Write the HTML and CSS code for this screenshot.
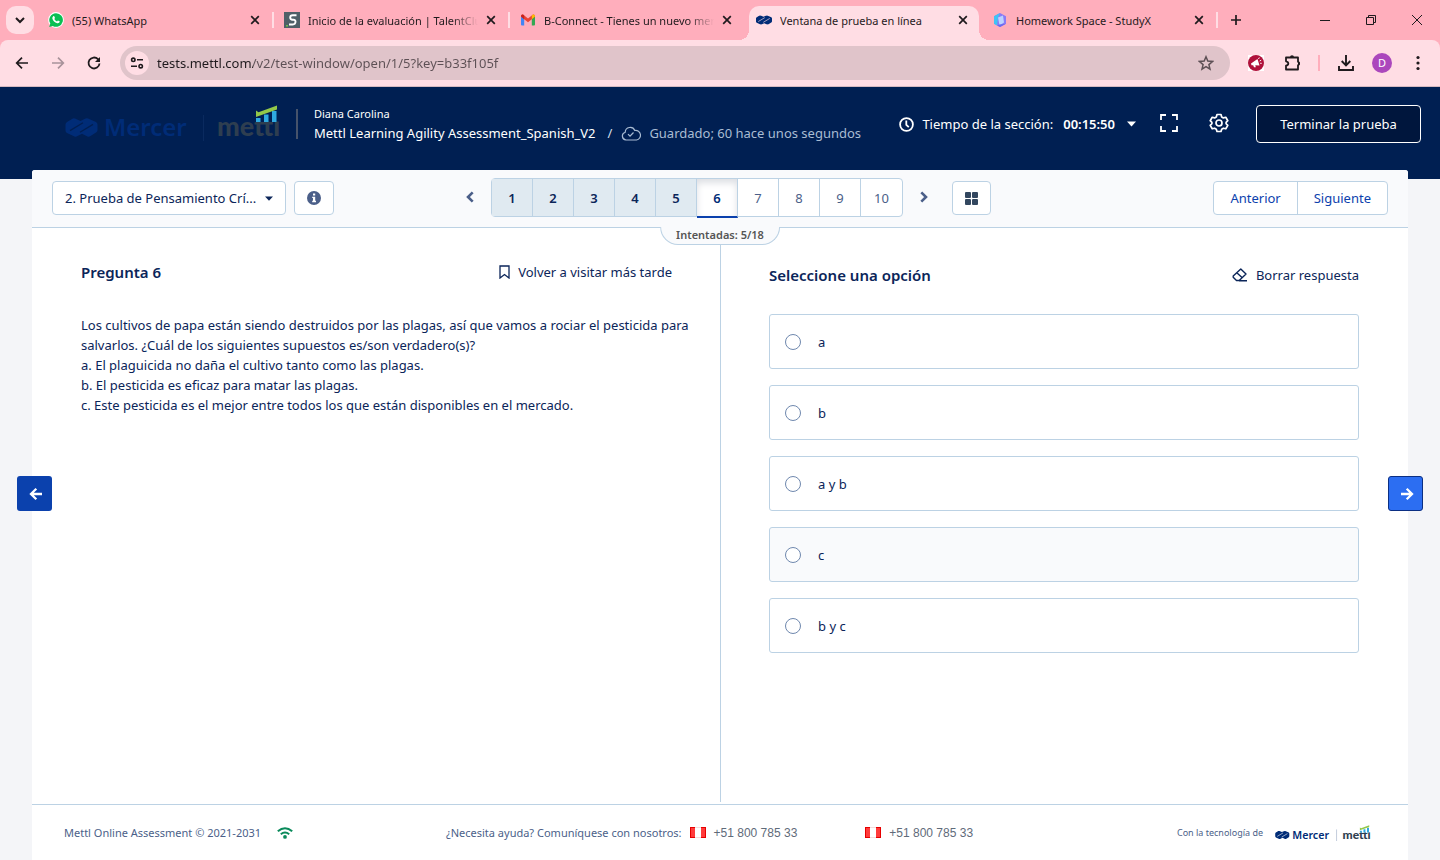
FILE: index.html
```html
<!DOCTYPE html>
<html lang="es">
<head>
<meta charset="utf-8">
<title>Ventana de prueba en línea</title>
<link rel="stylesheet" href="styles.css">
</head>
<body>
<svg class="defs" aria-hidden="true">
  <symbol id="close" viewBox="0 0 10 10"><path d="M1.2 1.2l7.6 7.6M8.8 1.2L1.2 8.8" stroke="currentColor" stroke-width="1.7"/></symbol>
  <symbol id="mercer" viewBox="0 0 32 19"><path d="M0 6.500Q0 5 1.500 4L7 .7Q8 0 9.500.5L15 3 19.500.8Q21 0 22.500.5L30.500 4Q32 5 32 6.500V12Q32 13.500 30.500 14.500L25 18Q23.500 19 22 18.400L16.500 15.800 12 18Q10.500 19 9 18.400L1.500 15Q0 14 0 12.500Z" fill="currentColor"/><path d="M4.500 12.600L17.500 4.800M14.500 14.200L27.500 6.400" class="mark-cut" fill="none" stroke-width="1.3"/></symbol>
  <symbol id="flag" viewBox="0 0 16 11"><path d="M0 0h16v11H0z" fill="#e60000"/><path d="M1 1h14v9H1z" fill="#ff3b3b"/><path d="M5 0h6v11H5z" fill="#f3dcdc"/><path d="M5 1h6v9H5z" fill="#fff"/></symbol>
</svg>

<header class="browser">
  <div class="tabs">
    <button class="tab-search" aria-label="Buscar pestañas"><svg width="10" height="7" viewBox="0 0 10 7"><path d="M1 1l4 4 4-4" fill="none" stroke="currentColor" stroke-width="2"/></svg></button>
    <div class="tab tab-line">
      <svg class="favicon" viewBox="0 0 16 16"><circle cx="8" cy="8" r="7.900" fill="#fff"/><path d="M8 1.200a6.800 6.800 0 1 1-3.300 12.700L1.200 15l1.100-3.400A6.800 6.800 0 0 1 8 1.200Z" fill="#0abf53"/><path d="M5.200 4.300c.6-.6 1.100-.2 1.300.4l.5 1.200-.7 1c.6 1.200 1.500 2 2.700 2.500l.9-1 1.800.9c0 1.500-1.200 2.200-2.500 1.900C6.800 10.700 4.800 8.600 4.300 6.300c0-.8.3-1.500.9-2Z" fill="#fff"/></svg>
      <span class="tab-title">(55) WhatsApp</span>
      <button class="tab-close" aria-label="Cerrar"><svg><use href="#close"/></svg></button>
    </div>
    <div class="tab tab-line">
      <svg class="favicon" viewBox="0 0 16 16"><path d="M0 0h16v16H0z" fill="#4f6068"/><path d="M12.500 3.200H8.800q-2.600 0-2.600 2.200T8.600 7.700h.9q2.200 0 2 2.300t-2.800 2.500H5" fill="none" stroke="#fff" stroke-width="1.900"/><path d="M2 13h2v1.500H2z" fill="#6bbf4a"/></svg>
      <span class="tab-title tab-fade">Inicio de la evaluación | TalentClue</span>
      <button class="tab-close" aria-label="Cerrar"><svg><use href="#close"/></svg></button>
    </div>
    <div class="tab">
      <svg class="favicon" viewBox="0 0 16 16"><path d="M1 4h3.200v9.500H2Q1 13.500 1 12.500Z" fill="#4285f4"/><path d="M11.800 4H15v8.500q0 1-1 1h-2.200Z" fill="#34a853"/><path d="M1 4.500Q1 2 3 2.500L8 6.500 13 2.500Q15 2 15 4.500L11.800 7.300 8 10.300 4.200 7.300Z" fill="#ea4335"/><path d="M11.800 3.400L13 2.500Q15 2 15 4.500L11.800 7.300Z" fill="#fbbc04"/><path d="M1 4.500Q1 2 3 2.500L4.200 3.400V7.300Z" fill="#c5221f"/></svg>
      <span class="tab-title tab-fade">B-Connect - Tienes un nuevo mensaje</span>
      <button class="tab-close" aria-label="Cerrar"><svg><use href="#close"/></svg></button>
    </div>
    <div class="tab tab-active">
      <svg class="favicon" viewBox="0 -5 32 29"><use href="#mercer" width="32" height="19"/></svg>
      <span class="tab-title">Ventana de prueba en línea</span>
      <button class="tab-close" aria-label="Cerrar"><svg><use href="#close"/></svg></button>
    </div>
    <div class="tab tab-line">
      <svg class="favicon" viewBox="0 0 16 16"><path d="M8 1l6 3.200v7.500L8 15l-6-3.300V4.200Z" fill="#8b7bf5"/><path d="M8 1L2 4.200v7.500l3 1.700L6 5.500Z" fill="#3fc4f5"/><path d="M6 5.500l5-2 1 7-4.500 3Z" fill="#bcd3ff"/><path d="M5 13.400L8 15l6-3.300-6.500.8Z" fill="#6a6af0"/></svg>
      <span class="tab-title">Homework Space - StudyX</span>
      <button class="tab-close" aria-label="Cerrar"><svg><use href="#close"/></svg></button>
    </div>
    <button class="new-tab" aria-label="Nueva pestaña"><svg width="12" height="12" viewBox="0 0 12 12"><path d="M6 1v10M1 6h10" stroke="currentColor" stroke-width="1.700"/></svg></button>
    <div class="window-controls">
      <button aria-label="Minimizar"><svg width="12" height="12" viewBox="0 0 12 12"><path d="M1 6.500h10" stroke="currentColor"/></svg></button>
      <button aria-label="Restaurar"><svg width="12" height="12" viewBox="0 0 12 12"><path d="M1.500 3.500h7v7h-7zM3.500 3V1.500h7v7H9" fill="none" stroke="currentColor"/></svg></button>
      <button aria-label="Cerrar ventana"><svg width="12" height="12" viewBox="0 0 12 12"><path d="M1 1l10 10M11 1L1 11" stroke="currentColor"/></svg></button>
    </div>
  </div>
  <div class="toolbar">
    <button class="tool" aria-label="Atrás"><svg width="16" height="16" viewBox="0 0 16 16"><path d="M14 8H3M8 2.700L2.700 8 8 13.300" fill="none" stroke="currentColor" stroke-width="1.700"/></svg></button>
    <button class="tool tool-off" aria-label="Adelante"><svg width="16" height="16" viewBox="0 0 16 16"><path d="M2 8h11M8 2.700L13.300 8 8 13.300" fill="none" stroke="currentColor" stroke-width="1.700"/></svg></button>
    <button class="tool" aria-label="Recargar"><svg width="16" height="16" viewBox="0 0 16 16"><path d="M13.500 8.500A5.500 5.500 0 1 1 12 4.200L13 5.500" fill="none" stroke="currentColor" stroke-width="1.800"/><path d="M14 2v5H9Z" fill="currentColor"/></svg></button>
    <div class="address">
      <button class="site-info" aria-label="Información del sitio"><svg width="14" height="14" viewBox="0 0 14 14" fill="none" stroke="currentColor" stroke-width="1.600"><circle cx="3.300" cy="3.800" r="1.700"/><path d="M7 3.800h6M1 10.200h6"/><circle cx="10.700" cy="10.200" r="1.700"/></svg></button>
      <input class="url" type="text" aria-label="Dirección" value="tests.mettl.com/v2/test-window/open/1/5?key=b33f105f">
      <button class="star" aria-label="Añadir a marcadores"><svg width="16" height="16" viewBox="0 0 16 16"><path d="M8 1.800l1.800 4.300 4.700.4-3.600 3.100 1.100 4.600L8 11.700l-4 2.500 1.100-4.600L1.500 6.500l4.700-.4Z" fill="none" stroke="currentColor" stroke-width="1.500"/></svg></button>
    </div>
    <button class="ext" aria-label="Extensión"><svg width="16" height="16" viewBox="0 0 16 16"><path d="M0 0h16v16H0z" fill="#fff"/><circle cx="8" cy="8" r="8" fill="#b0103a"/><path d="M3 8.500L9.500 4l2 6.500-4.200-.2.500 2H6l-.8-2H3.500Z" fill="#fff"/><path d="M10.500 4l.8-1.500M11.700 6l1.500-.8M12.200 8.300h1.500" stroke="#fff"/></svg></button>
    <button class="ext puzzle" aria-label="Extensiones"><svg width="20" height="18" viewBox="0 0 20 18"><path d="M3 3.500h12v4.200a2 2 0 0 1 0 3.600v4.200H3v-3.800q2.300-.4 2.300-2.200T3 7.300Z" fill="none" stroke="currentColor" stroke-width="1.800" stroke-linejoin="round"/><path d="M7 3.200a2 2 0 0 1 4 0ZM15 7.500a2 2 0 0 1 0 4Z" fill="currentColor"/></svg></button>
    <span class="tool-line"></span>
    <button class="ext" aria-label="Descargas"><svg width="18" height="18" viewBox="0 0 18 18"><path d="M9 1v10M4.700 7L9 11.300 13.300 7M2 12v4h14v-4" fill="none" stroke="currentColor" stroke-width="1.900"/></svg></button>
    <button class="avatar" aria-label="Perfil">D</button>
    <button class="ext" aria-label="Menú"><svg width="4" height="16" viewBox="0 0 4 16" fill="currentColor"><circle cx="2" cy="2.500" r="1.600"/><circle cx="2" cy="8" r="1.600"/><circle cx="2" cy="13.500" r="1.600"/></svg></button>
  </div>
</header>

<div class="app">
  <div class="top">
    <svg class="logo" viewBox="0 0 216 36" role="img" aria-label="Mercer Mettl">
      <use href="#mercer" y="13" width="33" height="19"/>
      <text class="logo-mercer" x="39" y="31">Mercer</text>
      <path class="logo-line" d="M138.500 10v26"/>
      <text class="logo-mettl" x="152" y="31">mettl</text>
      <path class="logo-cover" d="M190 2h26v14.500h-26z"/>
      <path d="M191 13h4.500v4H191zM199 9.500h4.500v7.500H199zM207 6h4.500v11H207z" fill="#2fa9e0"/>
      <path d="M191 5.500l2.500 1.800L212 .5v4L191 12Z" fill="#93c849"/>
    </svg>
    <div class="who">
      <div class="who-name">Diana Carolina</div>
      <div class="who-test"><span>Mettl Learning Agility Assessment_Spanish_V2</span><span class="slash">/</span>
        <svg width="20" height="15" viewBox="0 0 20 15" fill="none" stroke="currentColor" stroke-width="1.200"><path d="M5 14a4 4 0 0 1-.8-7.800A5 5 0 0 1 13.800 4.500a4.800 4.800 0 0 1 1.700 9.500Z"/><path d="M7 8.200L9 10.200 12.500 6.500"/></svg>
        <span class="saved">Guardado; 60 hace unos segundos</span></div>
    </div>
    <div class="timer">
      <svg width="15" height="15" viewBox="0 0 15 15" fill="none" stroke="currentColor" stroke-width="1.800"><circle cx="7.500" cy="7.500" r="6.400"/><path d="M7.300 3.500v4.300l2.500 2.400"/></svg>
      <span>Tiempo de la sección:</span><b>00:15:50</b>
      <button class="bare" aria-label="Mostrar tiempo"><svg width="9" height="6" viewBox="0 0 9 6"><path d="M0 .5h9L4.500 5.500Z" fill="currentColor"/></svg></button>
    </div>
    <button class="bare full" aria-label="Pantalla completa"><svg width="18" height="18" viewBox="0 0 18 18"><path d="M1 6V1h5M12 1h5v5M17 12v5h-5M6 17H1v-5" fill="none" stroke="currentColor" stroke-width="1.800"/></svg></button>
    <button class="bare gear" aria-label="Configuración"><svg width="20" height="20" viewBox="0 0 20 20" fill="none" stroke="currentColor" stroke-width="1.700" stroke-linejoin="round"><circle cx="10" cy="10" r="3"/><path d="M8 1.500h4l.7 2.400 1.700 1 2.400-.6 2 3.400-1.700 1.700v1.300l1.700 1.700-2 3.400-2.400-.6-1.700 1-.7 2.300H8l-.7-2.300-1.700-1-2.400.6-2-3.400 1.700-1.700V9.400L1.200 7.700l2-3.400 2.400.6 1.700-1Z"/></svg></button>
    <button class="finish">Terminar la prueba</button>
  </div>

  <main class="card">
    <nav class="bar">
      <div class="bar-left">
        <label class="section"><select aria-label="Sección"><option>2. Prueba de Pensamiento Crí...</option></select><svg width="8" height="5" viewBox="0 0 8 5"><path d="M0 .5h8L4 4.800Z" fill="currentColor"/></svg></label>
        <button class="box info" aria-label="Información"><svg width="14" height="14" viewBox="0 0 14 14"><circle cx="7" cy="7" r="7" fill="#4b5f89"/><path d="M6 2.500h2.200v2H6zM5.200 5.700h3v4.100H9v1.400H5.200V9.800H6V7.100h-.8z" fill="#fff"/></svg></button>
      </div>
      <div class="pager">
        <button class="step" aria-label="Página anterior"><svg width="8" height="12" viewBox="0 0 8 12"><path d="M6.700 1.300L2 6l4.700 4.700" fill="none" stroke="currentColor" stroke-width="2.600"/></svg></button>
        <div class="pages">
          <button class="page done">1</button><button class="page done">2</button><button class="page done">3</button><button class="page done">4</button><button class="page done">5</button><button class="page current">6</button><button class="page">7</button><button class="page">8</button><button class="page">9</button><button class="page">10</button>
        </div>
        <button class="step" aria-label="Página siguiente"><svg width="8" height="12" viewBox="0 0 8 12"><path d="M1.300 1.300L6 6l-4.700 4.700" fill="none" stroke="currentColor" stroke-width="2.600"/></svg></button>
        <button class="box grid" aria-label="Todas las preguntas"><svg width="13" height="13" viewBox="0 0 13 13" fill="#33475f"><rect width="6" height="6" rx="1"/><rect x="7" width="6" height="6" rx="1"/><rect y="7" width="6" height="6" rx="1"/><rect x="7" y="7" width="6" height="6" rx="1"/></svg></button>
      </div>
      <div class="moves"><button>Anterior</button><button>Siguiente</button></div>
      <div class="tries">Intentadas: 5/18</div>
    </nav>

    <div class="panes">
      <section class="pane question">
        <div class="pane-head">
          <h2>Pregunta 6</h2>
          <button class="bare link"><svg width="11" height="14" viewBox="0 0 11 14"><path d="M1 1h9v12L5.500 9.500 1 13Z" fill="none" stroke="currentColor" stroke-width="1.300"/></svg>Volver a visitar más tarde</button>
        </div>
        <p>Los cultivos de papa están siendo destruidos por las plagas, así que vamos a rociar el pesticida para salvarlos. ¿Cuál de los siguientes supuestos es/son verdadero(s)?<br>a. El plaguicida no daña el cultivo tanto como las plagas.<br>b. El pesticida es eficaz para matar las plagas.<br>c. Este pesticida es el mejor entre todos los que están disponibles en el mercado.</p>
      </section>
      <section class="pane answers">
        <div class="pane-head">
          <h2>Seleccione una opción</h2>
          <button class="bare link"><svg width="16" height="14" viewBox="0 0 16 14" fill="none" stroke="currentColor" stroke-width="1.400" stroke-linejoin="round"><path d="M8.800 1l5.200 5-6.800 6.500H4.500L1.200 9.200V8ZM4.800 4.700l5.500 5M7 12.800h8"/></svg>Borrar respuesta</button>
        </div>
        <div class="options">
          <label class="option"><input type="radio" name="answer">a</label>
          <label class="option"><input type="radio" name="answer">b</label>
          <label class="option"><input type="radio" name="answer">a y b</label>
          <label class="option hovered"><input type="radio" name="answer">c</label>
          <label class="option"><input type="radio" name="answer">b y c</label>
        </div>
      </section>
    </div>

    <footer class="foot">
      <div class="foot-left">Mettl Online Assessment © 2021-2031
        <svg width="16" height="12" viewBox="0 0 16 12"><path d="M.8 4.200Q8-1.800 15.200 4.200M3.800 7.200q4.200-3.300 8.400 0" fill="none" stroke="#0a8a5b" stroke-width="2"/><circle cx="8" cy="9.900" r="1.900" fill="#0a8a5b"/></svg></div>
      <div class="foot-help"><span>¿Necesita ayuda? Comuníquese con nosotros:</span>
        <span class="phone"><svg width="16" height="11"><use href="#flag"/></svg>+51 800 785 33</span>
        <span class="phone"><svg width="16" height="11"><use href="#flag"/></svg>+51 800 785 33</span></div>
      <div class="foot-brand">Con la tecnología de
        <svg class="logo logo-small" viewBox="0 0 216 36" role="img" aria-label="Mercer Mettl">
          <use href="#mercer" y="13" width="33" height="19"/>
          <text class="logo-mercer" x="39" y="31">Mercer</text>
          <path class="logo-line" d="M138.500 10v26"/>
          <text class="logo-mettl" x="152" y="31">mettl</text>
          <path class="logo-cover" d="M190 2h26v14.500h-26z"/>
          <path d="M191 13h4.500v4H191zM199 9.500h4.500v7.500H199zM207 6h4.500v11H207z" fill="#2fa9e0"/>
          <path d="M191 5.500l2.500 1.800L212 .5v4L191 12Z" fill="#93c849"/>
        </svg></div>
    </footer>
  </main>

  <button class="side side-prev" aria-label="Pregunta anterior"><svg width="14" height="14" viewBox="0 0 14 14"><path d="M13 7H3M7.300 1.800L2 7l5.300 5.200" fill="none" stroke="currentColor" stroke-width="2.300"/></svg></button>
  <button class="side side-next" aria-label="Pregunta siguiente"><svg width="14" height="14" viewBox="0 0 14 14"><path d="M1 7h10M6.700 1.800L12 7l-5.300 5.200" fill="none" stroke="currentColor" stroke-width="2.300"/></svg></button>
</div>
</body>
</html>
```

FILE: styles.css
```css
* { box-sizing: border-box; }

body {
  margin: 0;
  min-height: 100vh;
  display: flex;
  flex-direction: column;
  background: #f4f5f8;
  color: #0b2559;
  font: 13px/20px "Noto Sans", "Open Sans", sans-serif;
}

button, input, select { font: inherit; color: inherit; margin: 0; }
button { background: none; border: 0; padding: 0; display: flex; align-items: center; justify-content: center; cursor: pointer; }
svg { flex: none; display: block; }
.defs { position: absolute; width: 0; height: 0; }

/* Browser frame */
.browser { --cut: #ffdde4; background: #ffaebc; color: #1f1a1d; }
.tabs { display: flex; align-items: center; height: 40px; padding-left: 6px; font-size: 11px; }
.tab-search { width: 28px; height: 28px; margin-right: 4px; border-radius: 10px; background: #ffdde4; }
.tab { flex: 0 1 236px; min-width: 0; height: 40px; display: flex; align-items: center; gap: 8px; padding: 0 14px 0 10px; position: relative; z-index: 1; }
.tab-line { background: linear-gradient(#ffdde4, #ffdde4) right center / 2px 16px no-repeat; }
.tab-active::before { content: ""; position: absolute; z-index: -1; inset: 6px 3px 0; border-radius: 10px 10px 0 0; background: #ffdde4; }
.tab-active::after {
  content: ""; position: absolute; z-index: -1; left: -7px; right: -7px; bottom: 0; height: 10px;
  background:
    radial-gradient(circle at 0 0, transparent 10px, #ffdde4 10px) left / 10px 10px no-repeat,
    radial-gradient(circle at 100% 0, transparent 10px, #ffdde4 10px) right / 10px 10px no-repeat;
}
.favicon { width: 16px; height: 16px; color: #002c77; }
.mark-cut { stroke: var(--cut); }
.tab-title { flex: 1; min-width: 0; padding-top: 1px; overflow: hidden; white-space: nowrap; }
.tab-fade { -webkit-mask: linear-gradient(90deg, #000 85%, transparent); mask: linear-gradient(90deg, #000 85%, transparent); }
.tab-close { width: 10px; height: 10px; }
.tab-close svg { width: 10px; height: 10px; }
.new-tab { width: 36px; height: 28px; }
.window-controls { display: flex; margin-left: auto; }
.window-controls button { width: 46px; height: 40px; }
.toolbar { display: flex; align-items: center; height: 47px; padding: 0 6px 0 4px; background: #ffdde4; border-radius: 8px 8px 0 0; border-bottom: 1px solid #d5b9c0; }
.tool { width: 36px; height: 34px; }
.tool-off { color: #a8929a; }
.address { flex: 1; display: flex; align-items: center; height: 34px; margin: 0 10px 0 8px; padding: 0 16px 0 5px; border-radius: 17px; background: #e0c4ca; }
.site-info { width: 24px; height: 24px; border-radius: 50%; background: #ffdde4; }
.url {
  flex: 1; min-width: 0; height: 24px; padding: 0 0 0 8px; border: 0; outline: 0; color: transparent;
  background: linear-gradient(90deg, #1f1a1d 104px, #5d5055 104px);
  -webkit-background-clip: text; background-clip: text;
}
.star { color: #5d5055; }
.ext { width: 32px; height: 32px; }
.puzzle { width: 42px; }
.tool-line { width: 2px; height: 16px; margin: 0 10px 0 4px; background: #ffaebc; }
.avatar { width: 20px; height: 20px; margin: 0 10px; border-radius: 50%; background: #ab47bc; color: #fff; font-size: 11px; }

/* Test header */
.app { flex: 1; display: flex; flex-direction: column; position: relative; }
.top { --cut: #001f52; display: flex; align-items: flex-start; height: 92px; padding: 18px 19px 0 65px; background: #001f52; color: #fff; }
.logo { width: 216px; height: 36px; color: #002c77; }
.logo-mercer { font: 600 24px "Noto Sans", sans-serif; fill: #002c77; }
.logo-mettl { font: 900 27px Lato, sans-serif; fill: #2e3e50; }
.logo-line { stroke: #0a2a5f; }
.logo-cover { fill: #001f52; }
.who { margin: 4px 0 0 15px; padding-left: 16px; border-left: 2px solid #46536b; height: 30px; display: flex; flex-direction: column; justify-content: center; white-space: nowrap; }
.who-name { font-size: 11px; line-height: 18px; }
.who-test { display: flex; align-items: center; color: #a9bcd3; }
.who-test span:first-child { color: #fff; }
.slash { margin: 0 9px 0 12px; color: #d3deea; }
.saved { margin-left: 8px; }
.timer { display: flex; align-items: center; height: 38px; margin-left: auto; white-space: nowrap; }
.timer b { margin: 0 12px 0 10px; font-weight: 600; }
.timer > svg { margin-right: 8px; }
.full { height: 36px; margin-left: 24px; }
.gear { height: 36px; margin: 0 27px 0 31px; }
.finish { width: 165px; height: 38px; border: 1px solid #fff; border-radius: 4px; background: #00163d; }

/* Card */
.card { flex: 1; display: flex; flex-direction: column; margin: -9px 32px 0; border-radius: 3px 3px 0 0; background: #fff; }
.bar { position: relative; display: grid; grid-template-columns: 1fr auto 1fr; height: 58px; padding: 8px 20px 0; border-radius: 3px 3px 0 0; background: #f9fafc; border-bottom: 1px solid #bcd2e4; color: #002c77; }
.bar-left { display: flex; gap: 8px; padding-top: 3px; align-items: flex-start; }
.section { position: relative; display: block; width: 234px; }
.section select { appearance: none; width: 100%; height: 34px; padding: 0 24px 0 12px; border: 1px solid #bcd2e4; border-radius: 4px; background: #fff; color: #0b2559; }
.section svg { position: absolute; right: 13px; top: 15px; pointer-events: none; color: #0b2559; }
.box { height: 34px; border: 1px solid #bcd2e4; border-radius: 4px; background: #fff; }
.info { width: 40px; }
.pager { display: flex; align-items: flex-start; }
.step { width: 42px; height: 37px; color: #4b5f89; }
.pages { display: flex; border: 1px solid #bcd2e4; border-radius: 4px; background: #fff; }
.page { width: 41px; height: 37px; border-right: 1px solid #bcd2e4; color: #4b5f89; }
.page:last-child { border-right: 0; }
.done { background: #e0eaf1; color: #0b2559; font-weight: 600; }
.current { height: 39px; margin-bottom: -2px; border-bottom: 2px solid #0b41ad; color: #002c77; font-weight: 600; box-shadow: inset 0 4px 7px #dddfe4; }
.grid { width: 39px; margin: 3px 0 0 7px; }
.moves { display: flex; justify-self: end; margin-top: 3px; height: 34px; border: 1px solid #bcd2e4; border-radius: 4px; background: #fff; color: #0b41ad; }
.moves button { padding: 0 16px; }
.moves button + button { border-left: 1px solid #bcd2e4; }
.tries { position: absolute; top: 100%; left: 50%; transform: translateX(-50%); height: 18px; padding: 0 15px; border: 1px solid #bcd2e4; border-top: 0; border-radius: 0 0 18px 18px; background: #f9fafc; color: #555; font-size: 11px; line-height: 16px; font-weight: 600; white-space: nowrap; }

.panes { flex: 1; display: grid; grid-template-columns: 1fr 1fr; margin-bottom: 2px; }
.question { padding: 33px 24px 0 49px; }
.answers { padding: 36px 49px 0 48px; border-left: 1px solid #bcd2e4; }
.pane-head { display: flex; justify-content: space-between; align-items: center; height: 22px; }
.question .pane-head { margin-right: 24px; }
h2 { margin: 0; font-size: 15px; font-weight: 600; }
.link { gap: 8px; }
.question p { margin: 32px 0 0; }
.options { display: flex; flex-direction: column; gap: 16px; margin-top: 28px; }
.option { display: flex; align-items: center; gap: 17px; height: 55px; padding: 0 15px; border: 1px solid #bcd2e4; border-radius: 3px; background: #fff; }
.option input { appearance: none; width: 16px; height: 16px; border: 1px solid #6f88ae; border-radius: 50%; background: #fff; }
.hovered { background: #f9fafc; }

.foot { --cut: #fff; display: grid; grid-template-columns: 1fr auto 1fr; align-items: center; height: 56px; padding: 0 37px 0 32px; border-top: 1px solid #bcd2e4; color: #4b5f89; font-size: 11px; }
.foot-left, .foot-help, .foot-brand { display: flex; align-items: center; gap: 16px; white-space: nowrap; }
.foot-help { gap: 8px; margin-right: 16px; }
.phone { display: flex; align-items: center; gap: 8px; font: 12px/20px "Liberation Sans", sans-serif; color: #5f6b7a; }
.phone + .phone { margin-left: 60px; }
.foot-brand { justify-self: end; gap: 12px; font-size: 9px; }
.logo-small { width: 96px; height: 16px; }
.logo-small .logo-cover { fill: #fff; }
.logo-small .logo-line { stroke: #bcc8d8; stroke-width: 2; }

.side { position: absolute; top: 389px; width: 35px; height: 35px; padding-left: 3px; border-radius: 3px; color: #fff; }
.side-prev { left: 17px; background: #0b41ad; }
.side-next { right: 17px; border: 1px solid #0b2f83; background: #2c6ef2; }
```
